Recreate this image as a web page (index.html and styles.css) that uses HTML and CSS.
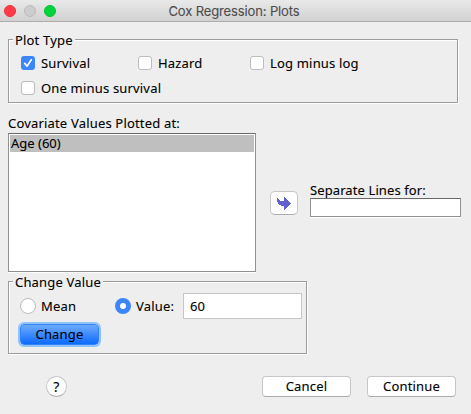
FILE: index.html
```html
<!DOCTYPE html>
<html lang="en">
	<head>
		<meta charset="utf-8">
		<title>Cox Regression: Plots</title>
		<link rel="stylesheet" href="styles.css">
	</head>
	<body>

<div class="titlebar">
	<div class="lights">
		<span class="light close"></span>
		<span class="light minimize"></span>
		<span class="light zoom"></span>
	</div>
	<div class="title">Cox Regression: Plots</div>
</div>

<div class="group plot-type">
	<div class="legend">Plot Type</div>
	<div class="checks">
		<label class="option"><span class="box checked"><svg width="14" height="14" viewBox="0 0 14 14"><path d="M3.7 7.4L6 10.2L10.3 3.8" fill="none" stroke="#fff" stroke-width="1.7" stroke-linecap="round" stroke-linejoin="round"/></svg></span>Survival</label>
		<label class="option"><span class="box"></span>Hazard</label>
		<label class="option"><span class="box"></span>Log minus log</label>
		<label class="option"><span class="box"></span>One minus survival</label>
	</div>
</div>

<div class="middle">
	<div class="covariates">
		<div class="caption">Covariate Values Plotted at:</div>
		<div class="list">
			<div class="item">Age (60)</div>
		</div>
	</div>
	<button class="button move" aria-label="Move"><svg width="14" height="13" viewBox="0 0 14 13"><path d="M0 1h1v1h1v1h1v1h4V0h1v1h1v1h1v1h1v1h1v1h1v1h1v1h-1v1h-1v1h-1v1h-1v1h-1v1h-1v1H7V9H4V8H2V7H1V5H0z" fill="#6260cc"/></svg></button>
	<div class="separate">
		<div class="caption">Separate Lines for:</div>
		<div class="field"></div>
	</div>
</div>

<div class="group change-value">
	<div class="legend">Change Value</div>
	<div class="radios">
		<label class="option"><span class="radio"></span>Mean</label>
		<label class="option"><span class="radio selected"></span>Value:</label>
		<div class="value">60</div>
	</div>
	<button class="button change">Change</button>
</div>

<div class="footer">
	<button class="button help">?</button>
	<button class="button">Cancel</button>
	<button class="button">Continue</button>
</div>

	</body>
</html>
```
FILE: styles.css
```css
* { box-sizing: border-box; }

body {
	margin: 0;
	width: 471px;
	height: 414px;
	overflow: hidden;
	background: #eee;
	color: #000;
	font: 400 13px/16px "Noto Sans", sans-serif;
	letter-spacing: .18px;
	-webkit-text-stroke: .1px;
	white-space: nowrap;
}

.titlebar {
	display: grid;
	grid-template-columns: 60px 1fr 63px;
	align-items: center;
	height: 22px;
	background: linear-gradient(#e9e9e9, #d1d1d1);
	border-bottom: 1px solid #adadad;
}

.lights {
	display: flex;
	gap: 8px;
	padding-left: 4px;
}

.light {
	width: 12px;
	height: 12px;
	border-radius: 50%;
	background: #cdcdcd;
	border: 1px solid #bababa;
}

.light.close {
	background: #ff3b47;
	border-color: #e9303c;
}

.light.zoom {
	background: #02d53c;
	border-color: #00c332;
}

.title {
	padding-top: 1px;
	text-align: center;
	font: 400 13px/16px Inter, sans-serif;
	letter-spacing: -.13px;
	color: #4c4c4c;
}

/* etched border: gray line with a white one beside it */
.group {
	margin-left: 8px;
	border: 1px solid #9c9c9c;
	box-shadow: 1px 1px 0 #fff, inset 1px 1px 0 #fff;
}

.legend {
	width: fit-content;
	height: 16px;
	margin: -8px 0 0 4px;
	padding: 0 2px;
	background: #eee;
}

.plot-type {
	width: 450px;
	height: 64px;
	margin-top: 17px;
}

.checks {
	display: grid;
	grid-template-columns: 117px 112px 1fr;
	grid-auto-rows: 25px;
	padding: 2px 0 0 12px;
}

.option {
	display: flex;
	align-items: center;
	gap: 6px;
}

.box {
	flex: none;
	width: 14px;
	height: 14px;
	border: 1px solid #bcbcbc;
	border-radius: 3px;
	background: #fff;
}

.box.checked {
	border: 0;
	background: #3b86fb;
}

.box svg {
	display: block;
}

.middle {
	display: flex;
	height: 156px;
	margin: 13px 0 0 8px;
}

.covariates {
	width: 248px;
}

.caption {
	height: 17px;
}

.covariates .caption {
	line-height: 15px;
}

.list {
	height: 139px;
	padding: 1px;
	background: #fff;
	border: 1px solid #919191;
	border-top-color: #686868;
	box-shadow: 0 1px 0 #fff;
}

.item {
	height: 17px;
	padding-left: 1px;
	background: #bfbfbf;
	letter-spacing: 0;
}

.button {
	display: flex;
	align-items: center;
	justify-content: center;
	width: 89px;
	height: 21px;
	padding: 0 0 1px;
	border: 1px solid #c6c6c6;
	border-bottom-color: #ababab;
	border-radius: 4px;
	background: #fff;
	color: #000;
	font: inherit;
	letter-spacing: inherit;
}

.move {
	width: 28px;
	height: 24px;
	margin: 75px 12px 0 14px;
	padding: 0;
	border-radius: 5px;
}

.separate {
	width: 151px;
	padding-top: 66px;
}

.separate .caption {
	height: 16px;
	letter-spacing: .1px;
}

.field {
	height: 19px;
	border: 1px solid #919191;
	border-top-color: #686868;
	background: #fff;
	box-shadow: 0 1px 0 #fff;
}

.change-value {
	width: 299px;
	height: 73px;
	margin-top: 9px;
}

.radios {
	display: grid;
	grid-template-columns: 95px 68px 119px;
	align-items: center;
	height: 26px;
	margin: 3px 0 0 11px;
}

.radios .option {
	gap: 5px;
}

.radio {
	flex: none;
	width: 16px;
	height: 16px;
	border: 1px solid #bcbcbc;
	border-radius: 50%;
	background: #fff;
}

.radio.selected {
	border: 5px solid #3b86fb;
}

.value {
	height: 26px;
	padding: 4px 0 0 6px;
	border: 1px solid #c6c6c6;
	background: #fff;
}

.change {
	width: 79px;
	height: 21px;
	margin: 5px 0 0 11px;
	border: 1px solid #3183f8;
	background: linear-gradient(#6eaafc, #0d6bff);
	box-shadow: 0 0 0 2px #8fc4fb;
}

.footer {
	display: flex;
	gap: 16px;
	margin: 22px 0 0 46px;
}

.help {
	width: 21px;
	margin-right: 179px;
	padding: 0;
	border-radius: 50%;
	font-size: 14px;
}
```
